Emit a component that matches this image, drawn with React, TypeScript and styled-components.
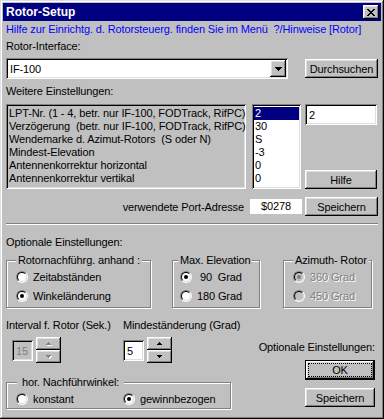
import React from 'react';
import styled, { createGlobalStyle, css } from 'styled-components';

const GlobalStyle = createGlobalStyle`
  html, body {
    margin: 0;
    padding: 0;
    background: #c0c0c0;
  }
  body {
    font-family: "Liberation Sans", Arial, sans-serif;
    font-size: 11px;
    letter-spacing: -0.12px;
    color: #000;
  }
  * {
    box-sizing: border-box;
  }
`;

const raised = css`
  background: #c0c0c0;
  box-shadow: inset -1px -1px #000, inset 1px 1px #fff, inset -2px -2px #808080, inset 2px 2px #dfdfdf;
`;

const sunken = css`
  box-shadow: inset 1px 1px #808080, inset -1px -1px #fff, inset 2px 2px #000, inset -2px -2px #dfdfdf;
`;

const Window = styled.div`
  width: 384px;
  height: 419px;
  padding: 3px;
  background: #c0c0c0;
  box-shadow: inset -1px -1px #000, inset 1px 1px #dfdfdf, inset -2px -2px #808080, inset 2px 2px #fff;
  display: flex;
  flex-direction: column;
`;

const TitleBar = styled.div`
  height: 18px;
  background: #000080;
  display: flex;
  align-items: center;
  justify-content: space-between;
  padding: 0 2px 0 3px;
`;

const TitleText = styled.span`
  color: #fff;
  font-weight: bold;
  font-size: 12px;
  letter-spacing: 0;
`;

const CloseButton = styled.div`
  ${raised};
  width: 16px;
  height: 14px;
  display: flex;
  align-items: center;
  justify-content: center;
  padding-right: 1px;
`;

const Body = styled.div`
  padding: 0 3px;
  display: flex;
  flex-direction: column;
`;

const Line = styled.div<{ $top: number; $color?: string }>`
  height: 13px;
  line-height: 13px;
  margin-top: ${p => p.$top}px;
  color: ${p => p.$color || '#000'};
  white-space: pre;
`;

const Row = styled.div<{ $top: number }>`
  display: flex;
  align-items: center;
  margin-top: ${p => p.$top}px;
`;

const Button = styled.div<{ $width?: number; $height?: number }>`
  ${raised};
  width: ${p => p.$width || 73}px;
  height: ${p => p.$height || 19}px;
  display: flex;
  align-items: center;
  justify-content: center;
  flex: none;
`;

const DefaultButton = styled.div`
  width: 70px;
  height: 20px;
  border: 1px solid #000;
  display: flex;
`;

const DefaultInner = styled.div`
  ${raised};
  flex: 1;
  padding: 2px;
  display: flex;
`;

const FocusRect = styled.div`
  flex: 1;
  border: 1px dotted #000;
  display: flex;
  align-items: center;
  justify-content: center;
  line-height: 11px;
`;

const ComboBox = styled.div`
  ${sunken};
  background: #fff;
  width: 282px;
  height: 21px;
  padding: 2px;
  display: flex;
  align-items: center;
`;

const ComboValue = styled.span`
  flex: 1;
  padding-left: 2px;
`;

const DropButton = styled.div`
  ${raised};
  width: 16px;
  height: 17px;
  display: flex;
  align-items: center;
  justify-content: center;
`;

const ListsRow = styled.div`
  display: flex;
  margin-top: 6px;
  height: 85px;
`;

const ListBox = styled.div<{ $width: number; $white?: boolean }>`
  ${sunken};
  width: ${p => p.$width}px;
  background: ${p => (p.$white ? '#fff' : '#c0c0c0')};
  padding: 3px 2px 2px 2px;
  overflow: hidden;
`;

const ListItem = styled.div<{ $selected?: boolean }>`
  height: 13px;
  line-height: 13px;
  padding-left: 1px;
  white-space: pre;
  background: ${p => (p.$selected ? '#000080' : 'transparent')};
  color: ${p => (p.$selected ? '#fff' : '#000')};
`;

const SideColumn = styled.div`
  margin-left: 4px;
  width: 73px;
  display: flex;
  flex-direction: column;
  justify-content: space-between;
`;

const TextField = styled.div<{ $width: number; $disabled?: boolean }>`
  ${sunken};
  width: ${p => p.$width}px;
  height: 21px;
  background: ${p => (p.$disabled ? '#c0c0c0' : '#fff')};
  color: ${p => (p.$disabled ? '#808080' : '#000')};
  padding: 0 4px;
  display: flex;
  align-items: center;
  flex: none;
`;

const PortRow = styled.div`
  display: flex;
  align-items: center;
  justify-content: flex-end;
  margin-top: 8px;
  height: 19px;
`;

const PortField = styled.div`
  width: 52px;
  height: 15px;
  background: #fff;
  margin: -1px 3px 0 6px;
  display: flex;
  align-items: center;
  justify-content: center;
`;

const Separator = styled.div`
  margin-top: 7px;
  height: 2px;
  border-top: 1px solid #808080;
  border-bottom: 1px solid #fff;
`;

const GroupsRow = styled.div`
  display: flex;
  margin-top: 5px;
`;

const Group = styled.fieldset<{ $width: number; $left?: number; $height: number }>`
  margin: 0 0 0 ${p => p.$left || 0}px;
  padding: 0 0 0 9px;
  width: ${p => p.$width}px;
  height: ${p => p.$height}px;
  min-inline-size: 0;
  border: 1px solid #808080;
  box-shadow: inset 1px 1px #fff, 1px 1px #fff;
  display: flex;
  flex-direction: column;
`;

const Legend = styled.legend<{ $indent: number }>`
  margin-left: ${p => p.$indent}px;
  padding: 0 2px;
  height: 13px;
  line-height: 13px;
  background: #c0c0c0;
  white-space: pre;
`;

const RadioRow = styled.div<{ $width?: number; $disabled?: boolean }>`
  height: 19px;
  display: flex;
  align-items: center;
  gap: 5px;
  width: ${p => (p.$width ? `${p.$width}px` : 'auto')};
  flex: none;
  color: ${p => (p.$disabled ? '#808080' : '#000')};
  text-shadow: ${p => (p.$disabled ? '1px 1px #fff' : 'none')};
  white-space: pre;
`;

const RadioOuter = styled.span`
  width: 12px;
  height: 12px;
  border-radius: 50%;
  border: 1px solid;
  border-color: #808080 #fff #fff #808080;
  display: flex;
  align-items: center;
  justify-content: center;
  flex: none;
`;

const RadioInner = styled.span<{ $checked: boolean; $disabled?: boolean }>`
  width: 10px;
  height: 10px;
  border-radius: 50%;
  border: 1px solid;
  border-color: #000 #dfdfdf #dfdfdf #000;
  background: ${p => (p.$disabled ? '#c0c0c0' : '#fff')};
  display: flex;
  align-items: center;
  justify-content: center;

  &::after {
    content: '';
    width: 4px;
    height: 4px;
    border-radius: 50%;
    background: ${p => (!p.$checked ? 'transparent' : p.$disabled ? '#808080' : '#000')};
  }
`;

const BottomRow = styled.div`
  display: flex;
  justify-content: space-between;
  margin-top: 11px;
`;

const LeftColumn = styled.div`
  width: 225px;
  display: flex;
  flex-direction: column;
`;

const SpinLabels = styled.div`
  display: grid;
  grid-template-columns: 117px auto;
  height: 13px;
  line-height: 13px;
  white-space: nowrap;
`;

const SpinRow = styled.div`
  display: grid;
  grid-template-columns: 111px auto;
  padding-left: 6px;
  margin-top: 5px;
`;

const Spin = styled.div`
  display: flex;
  align-items: center;
  gap: 3px;
  padding-top: 1px;
`;

const SpinButtons = styled.div`
  display: flex;
  flex-direction: column;
  margin-top: -1px;
`;

const SpinButton = styled.div`
  ${raised};
  width: 25px;
  height: 13px;
  display: flex;
  align-items: center;
  justify-content: center;
`;

const RadioPair = styled.div`
  display: flex;
`;

const RightColumn = styled.div`
  display: flex;
  flex-direction: column;
  align-items: flex-end;
  padding-top: 22px;
  margin-right: 3px;
`;

const OkWrap = styled.div`
  margin-top: 6px;
`;

const CloseGlyph = () => (
  <svg width="8" height="7" viewBox="0 0 8 7" shapeRendering="crispEdges">
    {[
      [0, 0, 2], [6, 0, 2],
      [1, 1, 2], [5, 1, 2],
      [2, 2, 4],
      [3, 3, 2],
      [2, 4, 4],
      [1, 5, 2], [5, 5, 2],
      [0, 6, 2], [6, 6, 2],
    ].map(([x, y, w], i) => (
      <rect key={i} x={x} y={y} width={w} height={1} fill="#000" />
    ))}
  </svg>
);

const DownArrow = () => (
  <svg width="7" height="4" viewBox="0 0 7 4" shapeRendering="crispEdges">
    <rect x="0" y="0" width="7" height="1" fill="#000" />
    <rect x="1" y="1" width="5" height="1" fill="#000" />
    <rect x="2" y="2" width="3" height="1" fill="#000" />
    <rect x="3" y="3" width="1" height="1" fill="#000" />
  </svg>
);

const SpinArrow = ({ up, disabled }: { up: boolean; disabled?: boolean }) => {
  const rows = up ? [[2, 1], [1, 3], [0, 5]] : [[0, 5], [1, 3], [2, 1]];
  const fill = disabled ? '#808080' : '#000';
  return (
    <svg width="6" height="4" viewBox="0 0 6 4" shapeRendering="crispEdges">
      {disabled &&
        rows.map(([x, w], i) => (
          <rect key={`s${i}`} x={x + 1} y={i + 1} width={w} height={1} fill="#fff" />
        ))}
      {rows.map(([x, w], i) => (
        <rect key={i} x={x} y={i} width={w} height={1} fill={fill} />
      ))}
    </svg>
  );
};

const Radio = ({
  label,
  checked,
  disabled,
  width,
}: {
  label: string;
  checked: boolean;
  disabled?: boolean;
  width?: number;
}) => (
  <RadioRow $width={width} $disabled={disabled}>
    <RadioOuter>
      <RadioInner $checked={checked} $disabled={disabled} />
    </RadioOuter>
    <span>{label}</span>
  </RadioRow>
);

const params = [
  'LPT-Nr. (1 - 4, betr. nur IF-100, FODTrack, RifPC)',
  'Verzögerung  (betr. nur IF-100, FODTrack, RifPC)',
  'Wendemarke d. Azimut-Rotors  (S oder N)',
  'Mindest-Elevation',
  'Antennenkorrektur horizontal',
  'Antennenkorrektur vertikal',
];

const values = ['2', '30', 'S', '-3', '0', '0'];

export default function App() {
  return (
    <>
      <GlobalStyle />
      <Window>
        <TitleBar>
          <TitleText>Rotor-Setup</TitleText>
          <CloseButton>
            <CloseGlyph />
          </CloseButton>
        </TitleBar>
        <Body>
          <Line $top={2} $color="#0000ff">
            Hilfe zur Einrichtg. d. Rotorsteuerg. finden Sie im Menü  ?/Hinweise [Rotor]
          </Line>
          <Line $top={4}>Rotor-Interface:</Line>
          <Row $top={5}>
            <ComboBox>
              <ComboValue>IF-100</ComboValue>
              <DropButton>
                <DownArrow />
              </DropButton>
            </ComboBox>
            <Button style={{ marginLeft: 'auto' }}>Durchsuchen</Button>
          </Row>
          <Line $top={6}>Weitere Einstellungen:</Line>
          <ListsRow>
            <ListBox $width={240}>
              {params.map(p => (
                <ListItem key={p}>{p}</ListItem>
              ))}
            </ListBox>
            <ListBox $width={49} $white style={{ marginLeft: 6 }}>
              {values.map((v, i) => (
                <ListItem key={i} $selected={i === 0}>
                  {v}
                </ListItem>
              ))}
            </ListBox>
            <SideColumn>
              <TextField $width={72}>2</TextField>
              <Button $width={72}>Hilfe</Button>
            </SideColumn>
          </ListsRow>
          <PortRow>
            <span>verwendete Port-Adresse</span>
            <PortField>$0278</PortField>
            <Button>Speichern</Button>
          </PortRow>
          <Separator />
          <Line $top={11}>Optionale Einstellungen:</Line>
          <GroupsRow>
            <Group $width={145} $height={54}>
              <Legend $indent={0}>Rotornachführg. anhand :</Legend>
              <Radio label="Zeitabständen" checked={false} />
              <Radio label="Winkeländerung" checked />
            </Group>
            <Group $width={88} $left={21} $height={54} style={{ paddingLeft: 7 }}>
              <Legend $indent={-2}>Max. Elevation</Legend>
              <Radio label=" 90  Grad" checked />
              <Radio label="180 Grad" checked={false} />
            </Group>
            <Group $width={89} $left={23} $height={54}>
              <Legend $indent={0}>Azimuth- Rotor</Legend>
              <Radio label="360 Grad" checked disabled />
              <Radio label="450 Grad" checked={false} disabled />
            </Group>
          </GroupsRow>
          <BottomRow>
            <LeftColumn>
              <SpinLabels>
                <span>Interval f. Rotor (Sek.)</span>
                <span>Mindeständerung (Grad)</span>
              </SpinLabels>
              <SpinRow>
                <Spin>
                  <TextField $width={21} $disabled>15</TextField>
                  <SpinButtons>
                    <SpinButton>
                      <SpinArrow up disabled />
                    </SpinButton>
                    <SpinButton>
                      <SpinArrow up={false} disabled />
                    </SpinButton>
                  </SpinButtons>
                </Spin>
                <Spin>
                  <TextField $width={21}>5</TextField>
                  <SpinButtons>
                    <SpinButton>
                      <SpinArrow up />
                    </SpinButton>
                    <SpinButton>
                      <SpinArrow up={false} />
                    </SpinButton>
                  </SpinButtons>
                </Spin>
              </SpinRow>
              <Group $width={225} $height={33} style={{ marginTop: 13 }}>
                <Legend $indent={1}> hor. Nachführwinkel: </Legend>
                <RadioPair>
                  <Radio label="konstant" checked={false} width={107} />
                  <Radio label="gewinnbezogen" checked />
                </RadioPair>
              </Group>
            </LeftColumn>
            <RightColumn>
              <Line $top={0}>Optionale Einstellungen:</Line>
              <OkWrap>
                <DefaultButton>
                  <DefaultInner>
                    <FocusRect>OK</FocusRect>
                  </DefaultInner>
                </DefaultButton>
              </OkWrap>
              <Button $width={70} style={{ marginTop: 8 }}>
                Speichern
              </Button>
            </RightColumn>
          </BottomRow>
        </Body>
      </Window>
    </>
  );
}
